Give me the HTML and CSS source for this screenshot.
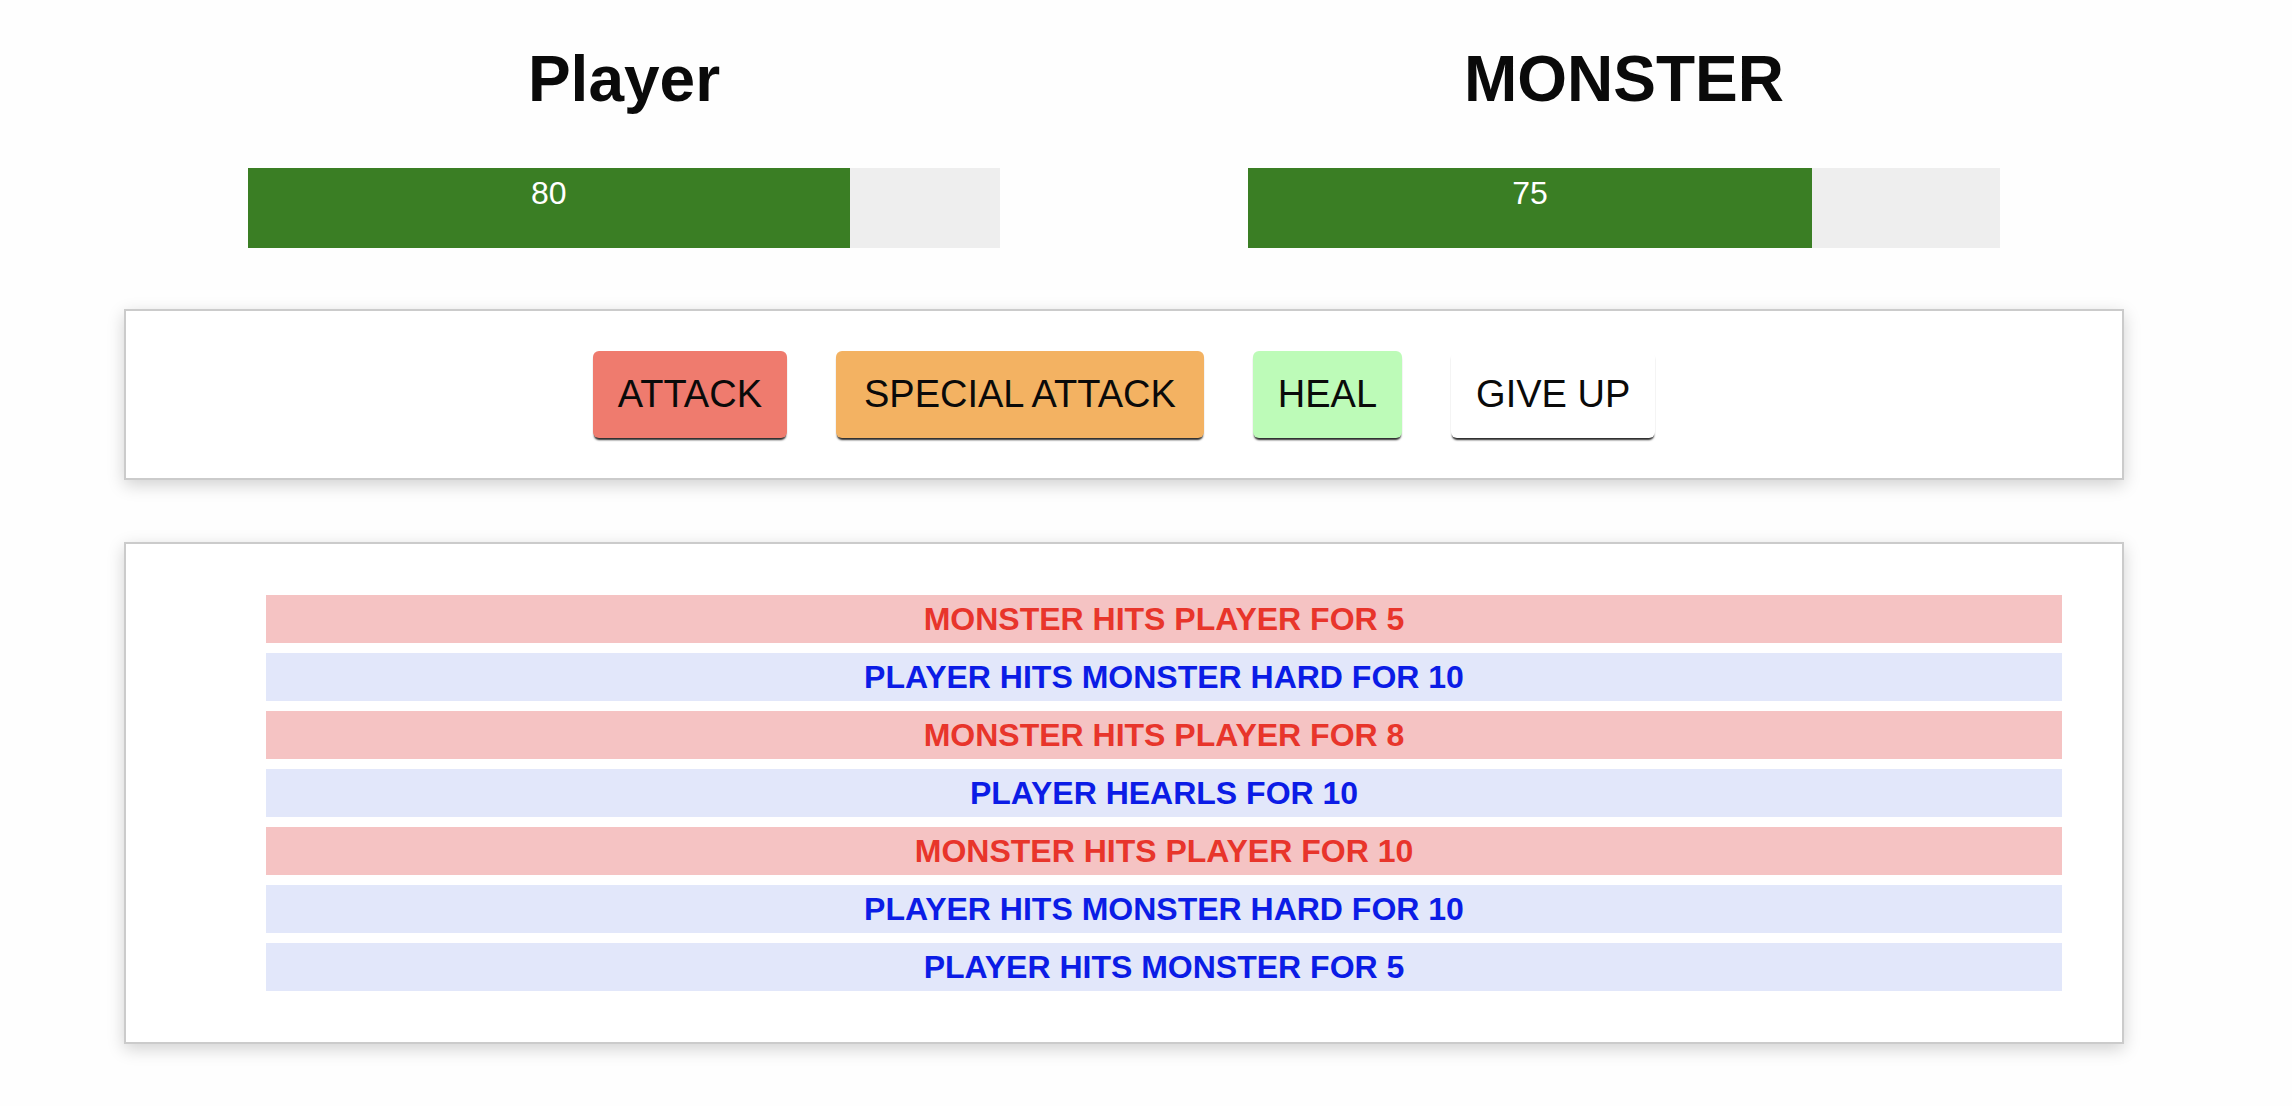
FILE: index.html
```html
<!DOCTYPE html>
<html lang="en">
<head>
<meta charset="utf-8">
<title>Monster Slayer</title>
<link rel="stylesheet" href="styles.css">
</head>
<body>
<main class="app">
  <header class="stats">
    <section class="stat">
      <h1 class="stat-name">Player</h1>
      <div class="bar"><div class="bar-fill" style="width: 80%">80</div></div>
    </section>
    <section class="stat">
      <h1 class="stat-name">MONSTER</h1>
      <div class="bar"><div class="bar-fill" style="width: 75%">75</div></div>
    </section>
  </header>

  <section class="card controls">
    <button class="btn btn-attack">ATTACK</button>
    <button class="btn btn-special">SPECIAL ATTACK</button>
    <button class="btn btn-heal">HEAL</button>
    <button class="btn btn-giveup">GIVE UP</button>
  </section>

  <section class="card log">
    <ul class="log-list">
      <li class="log-item monster">Monster hits player for 5</li>
      <li class="log-item player">Player hits monster hard for 10</li>
      <li class="log-item monster">Monster hits player for 8</li>
      <li class="log-item player">Player hearls for 10</li>
      <li class="log-item monster">Monster hits player for 10</li>
      <li class="log-item player">Player hits monster hard for 10</li>
      <li class="log-item player">Player hits monster for 5</li>
    </ul>
  </section>
</main>
</body>
</html>
```

FILE: styles.css
```css
html, body {
  margin: 0;
  padding: 0;
  background: #fefefe;
  font-family: "Liberation Sans", Arial, Helvetica, sans-serif;
  color: #0a0a0a;
}

.app {
  width: 2000px;
  margin: 0 0 0 124px;
  padding-bottom: 40px;
}

.stats {
  display: grid;
  grid-template-columns: 1fr 1fr;
}

.stat {
  text-align: center;
}

.stat-name {
  margin: 42px 0 0;
  font-size: 64px;
  line-height: 74px;
  font-weight: 700;
}

.bar {
  width: 752px;
  height: 80px;
  margin: 52px auto 0;
  background: #eeeeee;
}

.bar-fill {
  height: 100%;
  box-sizing: border-box;
  padding-top: 7px;
  background: #3a7e24;
  color: #ffffff;
  font-size: 32px;
  text-align: center;
}

.card {
  background: #ffffff;
  border: 2px solid #cbcbcb;
  box-shadow: 0 5px 16px rgba(0, 0, 0, 0.18);
}

.controls {
  margin-top: 61px;
  padding: 40px;
  display: flex;
  justify-content: center;
  align-items: center;
  gap: 49px;
}

.btn {
  font-family: "Liberation Sans", Arial, Helvetica, sans-serif;
  font-size: 38px;
  line-height: normal;
  padding: 22px 25px;
  border: none;
  border-radius: 6px;
  color: #0a0a0a;
  box-shadow: 0 3px 2px -1px rgba(0, 0, 0, 0.85);
  cursor: pointer;
}

.btn-attack { background: #ef7b6e; }
.btn-special { background: #f3b262; padding-left: 28px; padding-right: 28px; }
.btn-heal { background: #bdfbb8; }
.btn-giveup { background: #ffffff; }

.log {
  margin-top: 62px;
  padding: 51px 60px;
}

.log-list {
  list-style: none;
  margin: 0;
  padding: 0 0 0 80px;
}

.log-item {
  height: 48px;
  line-height: 48px;
  margin-bottom: 10px;
  font-size: 32px;
  font-weight: 700;
  text-transform: uppercase;
  text-align: center;
}

.log-item:last-child {
  margin-bottom: 0;
}

.log-item.monster {
  background: #f5c3c3;
  color: #e8352b;
}

.log-item.player {
  background: #e2e7fa;
  color: #0b1ce6;
}
```
